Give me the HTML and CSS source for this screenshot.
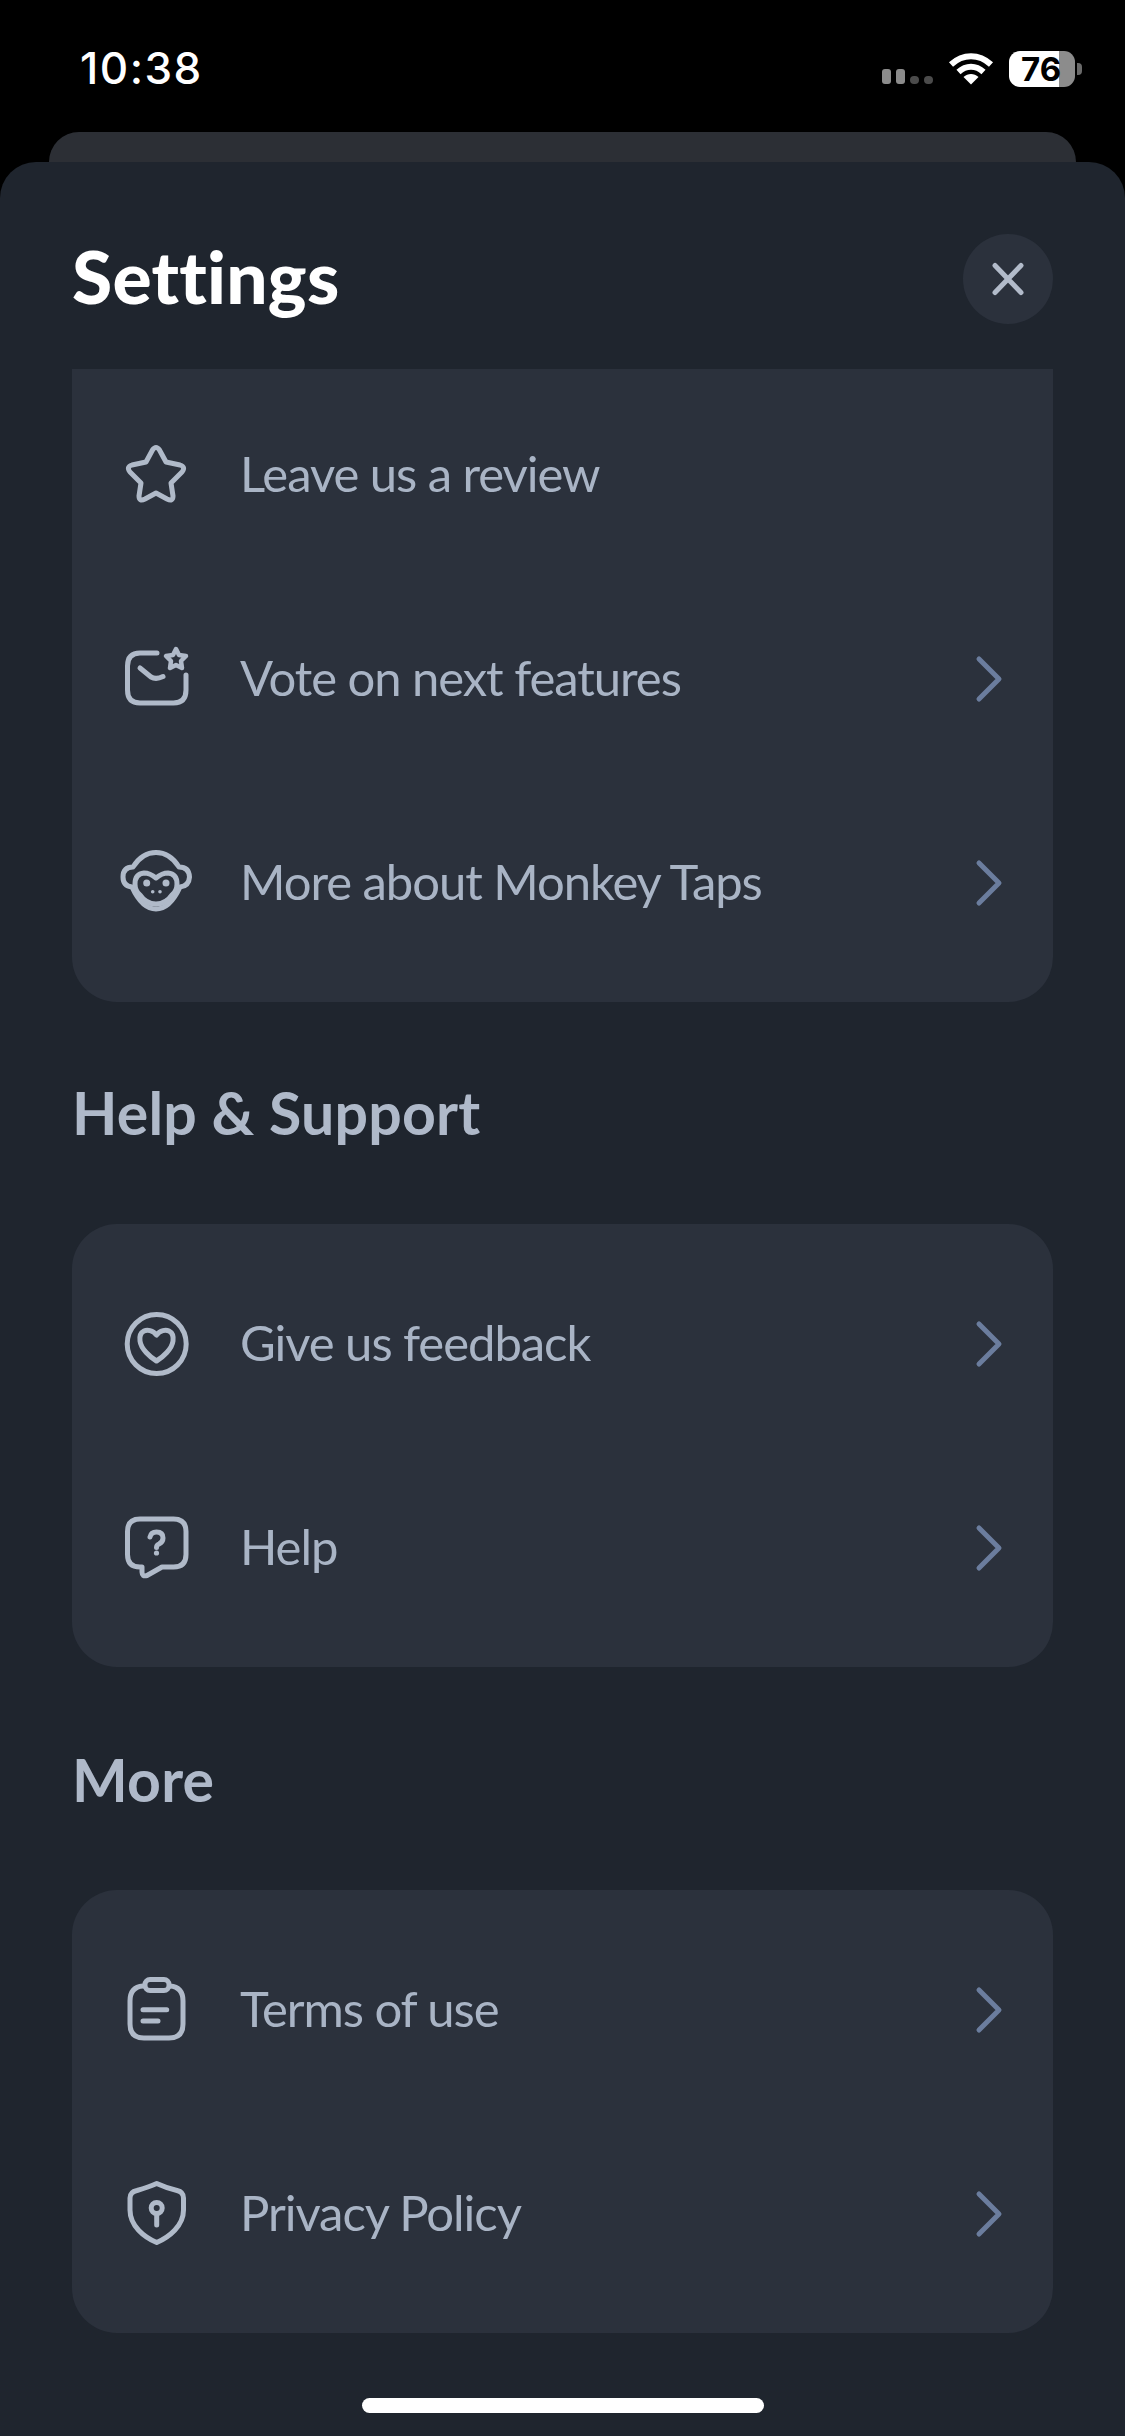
FILE: index.html
```html
<!DOCTYPE html>
<html lang="en">
<head>
<meta charset="utf-8">
<title>Settings</title>
<link rel="stylesheet" href="styles.css">
</head>
<body>
<div class="screen">
  <header class="status">
    <span class="time">10:38</span>
    <div class="status-icons">
      <div class="signal"><i class="bar"></i><i class="bar"></i><i class="dot"></i><i class="dot"></i></div>
      <svg class="wifi" width="46" height="34" viewBox="0 0 46 34"><path class="wifi-arc" d="M3 13.5C15 2.5 31 2.5 43 13.5"/><path class="wifi-arc" d="M10.5 21C18 14 28 14 35.5 21"/><path class="wifi-fill" d="M23 33.5 15.5 26C20 22 26 22 30.5 26Z"/></svg>
      <div class="battery-wrap"><div class="battery">76</div><i class="nub"></i></div>
    </div>
  </header>
  <div class="back-card"></div>
  <main class="sheet">
    <div class="sheet-head">
      <h1 class="title">Settings</h1>
      <button class="close" aria-label="Close"><svg width="36" height="38" viewBox="0 0 36 38"><path class="close-x" d="M5 5.5 31 32.5M31 5.5 5 32.5"/></svg></button>
    </div>

    <section class="card card-cut">
      <div class="row">
        <svg class="icon" viewBox="0 0 72 72"><path d="M32.5 11Q36 6 39.5 11L46 23 60 26Q66 28 62 33L51 44 53 57Q53 63 47 60L36 54 25 60Q19 63 19 57L21 44 10 33Q6 28 12 26L26 23Z"/></svg>
        <span class="label">Leave us a review</span>
      </div>
      <div class="row">
        <svg class="icon" viewBox="0 0 72 72"><path d="M37 10H20Q7.5 10 7.5 23V47Q7.5 60 20 60H53.5Q66 60 66 47V32"/><path d="M20 25 31 34Q36 37 43 33.5"/><path class="thin" d="M56 6 59 12 66 13 61 18 62 25 56 22 50 25 51 18 46 13 53 12Z"/></svg>
        <span class="label">Vote on next features</span>
        <svg class="chev" viewBox="0 0 30 50"><path d="M5 5 25 25 5 45"/></svg>
      </div>
      <div class="row">
        <svg class="icon" viewBox="0 0 72 72"><path d="M13 20Q22 5.5 36 5.5Q50 5.5 59 20Q69 20 69.5 30Q69 39 60 40Q50 62 36 62Q22 62 12 40Q3 39 3 30Q3 20 13 20Z"/><path d="M36 31Q42 26 48 26Q57 27 57 37Q57 44 52 48Q46 57 36 57Q26 57 20 48Q15 44 15 37Q15 27 24 26Q30 26 36 31Z"/><path class="hair" d="M22 53Q36 64 50 53"/><circle class="solid" cx="26.7" cy="36" r="3.5"/><circle class="solid" cx="46" cy="36" r="3.5"/><circle class="solid" cx="32.7" cy="44.7" r="1.8"/><circle class="solid" cx="40" cy="44.7" r="1.8"/></svg>
        <span class="label">More about Monkey Taps</span>
        <svg class="chev" viewBox="0 0 30 50"><path d="M5 5 25 25 5 45"/></svg>
      </div>
    </section>

    <h2 class="section-title">Help &amp; Support</h2>
    <section class="card">
      <div class="row">
        <svg class="icon" viewBox="0 0 72 72"><circle cx="36.7" cy="36" r="29.5"/><path d="M36.5 27C33 22 27 21.5 24 23C20 25 19.5 29 20 33C21 41 30 49 36.5 53C43 49 52 41 53 33C53.5 29 53 25 49 23C46 21.5 40 22 36.5 27Z"/></svg>
        <span class="label">Give us feedback</span>
        <svg class="chev" viewBox="0 0 30 50"><path d="M5 5 25 25 5 45"/></svg>
      </div>
      <div class="row">
        <svg class="icon" viewBox="0 0 72 72"><path d="M20 7H53.5Q66 7 66 19.5V42.5Q66 55 53.5 55H42L27 63.5Q22 65 22 60V55H20Q7.5 55 7.5 42.5V19.5Q7.5 7 20 7Z"/><path d="M30 25Q31 20 36.5 20Q43 20 43 26Q43 30 39 32Q36.5 33 36.5 35.5"/><circle class="solid" cx="36.5" cy="41" r="2.6"/></svg>
        <span class="label">Help</span>
        <svg class="chev" viewBox="0 0 30 50"><path d="M5 5 25 25 5 45"/></svg>
      </div>
    </section>

    <h2 class="section-title section-title-more">More</h2>
    <section class="card">
      <div class="row">
        <svg class="icon" viewBox="0 0 72 72"><path d="M23 12Q10 13 10 27V50Q10 64 24 64H49Q63 64 63 50V27Q63 13 50 12"/><rect x="25" y="5.5" width="24" height="11" rx="5"/><path d="M23 35.7H46.7M23 47H38"/></svg>
        <span class="label">Terms of use</span>
        <svg class="chev" viewBox="0 0 30 50"><path d="M5 5 25 25 5 45"/></svg>
      </div>
      <div class="row">
        <svg class="icon" viewBox="0 0 72 72"><path d="M36.7 5.5C31 8 22 11 17 12.5Q10 14 10 20V32C10 48 24 59 36.7 64.5C49 59 63.5 48 63.5 32V20Q63.5 14 57 12.5C51 11 42 8 36.7 5.5Z"/><circle cx="36.7" cy="30" r="5.5"/><path d="M36.7 36V47"/></svg>
        <span class="label">Privacy Policy</span>
        <svg class="chev" viewBox="0 0 30 50"><path d="M5 5 25 25 5 45"/></svg>
      </div>
    </section>
    <div class="home-indicator"></div>
  </main>
</div>
</body>
</html>
```

FILE: styles.css
```css
* { box-sizing: border-box; }
html, body { margin: 0; padding: 0; background: #000; }
.screen {
  width: 1125px;
  height: 2436px;
  overflow: hidden;
  display: flex;
  flex-direction: column;
  font-family: "Lato", "Liberation Sans", sans-serif;
}
.status {
  height: 132px;
  flex: none;
  display: flex;
  justify-content: space-between;
  align-items: flex-start;
  padding: 43px 43px 0 80px;
}
.time {
  font-family: "Inter", "Liberation Sans", sans-serif;
  font-size: 44px;
  font-weight: 500;
  line-height: 50px;
  letter-spacing: 1.5px;
  color: #fff;
}
.status-icons { display: flex; align-items: flex-start; padding-top: 8px; }
.signal { display: flex; align-items: flex-end; gap: 5px; height: 33px; margin-right: 15px; }
.bar { width: 9px; height: 15px; border-radius: 3px; background: #8c8c8c; }
.dot { width: 9px; height: 8px; border-radius: 4px; background: #4b4b4b; }
.wifi { margin-right: 15px; }
.wifi-arc { fill: none; stroke: #fff; stroke-width: 6; }
.wifi-fill { fill: #fff; }
.battery-wrap { display: flex; align-items: center; gap: 2px; }
.battery {
  width: 66px;
  height: 36px;
  border-radius: 11px;
  background: linear-gradient(90deg, #fff 76%, #8c8c8c 76%);
  color: #000;
  font-family: "Inter", "Liberation Sans", sans-serif;
  font-size: 33px;
  font-weight: 700;
  line-height: 36px;
  text-align: left;
  padding-left: 12px;
}
.nub { width: 5px; height: 12px; border-radius: 0 4px 4px 0; background: #6a6a6a; }
.back-card {
  flex: none;
  height: 30px;
  margin: 0 49px;
  border-radius: 30px 30px 0 0;
  background: #2c2f35;
}
.sheet {
  flex: 1;
  background: #1f252e;
  border-radius: 36px 36px 0 0;
  padding: 0 72px;
}
.sheet-head {
  height: 207px;
  display: flex;
  justify-content: space-between;
  align-items: flex-start;
  padding-top: 72px;
}
.title {
  margin: -3px 0 0;
  font-size: 73px;
  font-weight: 900;
  line-height: 90px;
  letter-spacing: 0.25px;
  color: #fff;
}
.close {
  width: 90px;
  height: 90px;
  border: 0;
  padding: 0;
  border-radius: 50%;
  background: #2b313c;
  display: flex;
  align-items: center;
  justify-content: center;
}
.close-x { fill: none; stroke: #b2bbca; stroke-width: 5; stroke-linecap: round; }
.card {
  background: #2b313c;
  border-radius: 45px;
  padding: 18px 0 17px;
}
.card-cut {
  border-radius: 0 0 45px 45px;
  padding: 4px 0 17px;
}
.row {
  height: 204px;
  display: flex;
  align-items: center;
  gap: 48px;
  padding: 0 49px 0 48px;
}
.icon {
  width: 72px;
  height: 72px;
  flex: none;
  fill: none;
  stroke: #b0bac9;
  stroke-width: 5;
  stroke-linecap: round;
  stroke-linejoin: round;
}
.icon .solid { fill: #b0bac9; stroke: none; }
.icon .thin { stroke-width: 4.5; }
.icon .hair { stroke-width: 1.5; }
.label {
  flex: 1;
  font-size: 49px;
  font-weight: 400;
  line-height: 56px;
  letter-spacing: -1.05px;
  margin-top: -4px;
  color: #a9b4c5;
}
.chev {
  width: 30px;
  height: 50px;
  flex: none;
  fill: none;
  stroke: #6b7d9e;
  stroke-width: 5;
  stroke-linecap: round;
  stroke-linejoin: round;
}
.section-title {
  margin: 0;
  height: 222px;
  padding-top: 76px;
  font-size: 59px;
  font-weight: 700;
  line-height: 70px;
  letter-spacing: 0.2px;
  color: #afb9c9;
}
.section-title-more { height: 223px; padding-top: 78px; }
.home-indicator {
  width: 402px;
  height: 15px;
  margin: 65px 0 0 290px;
  border-radius: 8px;
  background: #fff;
}
```
